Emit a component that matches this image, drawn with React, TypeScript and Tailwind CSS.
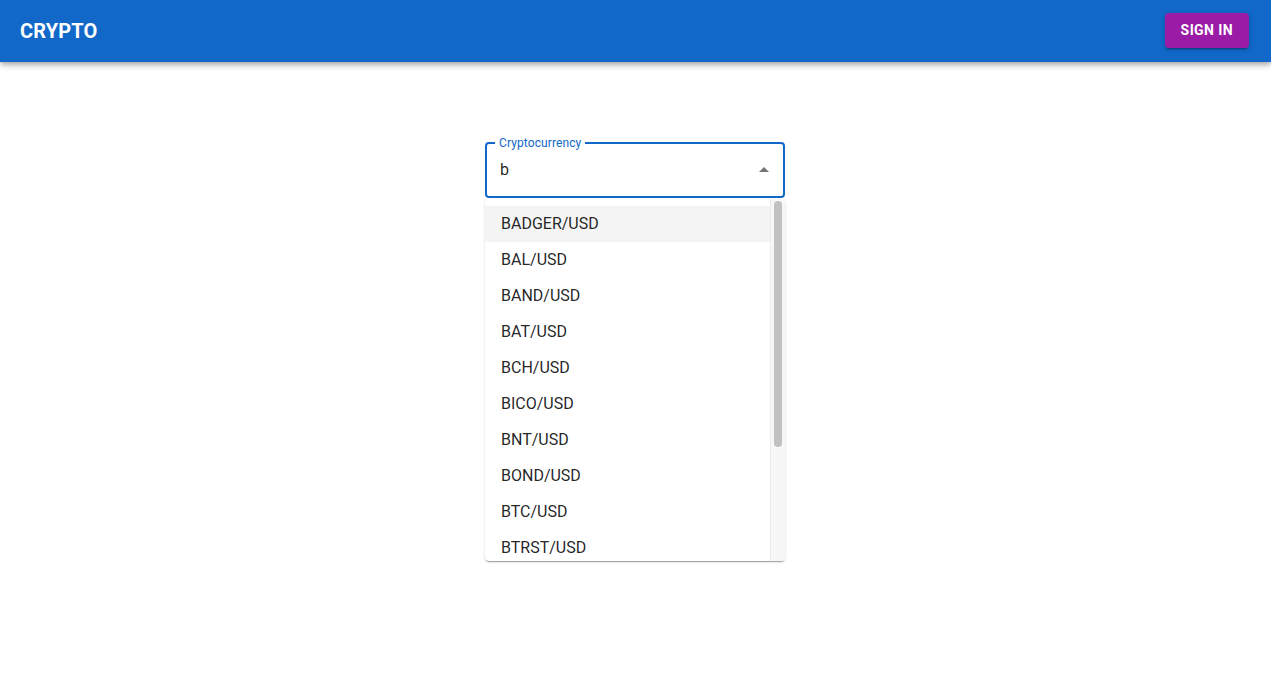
import React from "react";

const options = [
  "BADGER/USD",
  "BAL/USD",
  "BAND/USD",
  "BAT/USD",
  "BCH/USD",
  "BICO/USD",
  "BNT/USD",
  "BOND/USD",
  "BTC/USD",
  "BTRST/USD",
];

export default function App() {
  return (
    <div className="min-h-[683px] bg-white" style={{ fontFamily: "Roboto, 'Liberation Sans', sans-serif" }}>
      <header className="h-[62px] bg-[#1168c8] flex items-center justify-between pl-5 pr-[22px] shadow-[0_2px_4px_-1px_rgba(0,0,0,0.2),0_4px_5px_0_rgba(0,0,0,0.14),0_1px_10px_0_rgba(0,0,0,0.12)] relative z-10">
        <div className="text-white text-[20px] font-bold tracking-[0.15px] -mt-[1px]">CRYPTO</div>
        <button className="h-[35px] -mt-[2px] px-4 rounded-[4px] bg-[#9a1ba6] text-white text-[14px] font-bold tracking-[0.4px] uppercase shadow-[0_3px_1px_-2px_rgba(0,0,0,0.2),0_2px_2px_0_rgba(0,0,0,0.14),0_1px_5px_0_rgba(0,0,0,0.12)]">
          Sign in
        </button>
      </header>

      <div className="flex justify-center pt-[80px]">
        <div className="w-[300px] mr-[1px] flex flex-col">
          <div className="h-[56px] border-2 border-[#1168c8] rounded-[4px] pl-[13px] pr-[7px] flex items-center relative">
            <span className="absolute left-[8px] -top-[8px] bg-white px-[4px] text-[12px] leading-[14px] text-[#1168c8] tracking-[0.1px]">
              Cryptocurrency
            </span>
            <span className="flex-1 text-[16px] text-[rgba(0,0,0,0.87)]">b</span>
            <svg width="24" height="24" viewBox="0 0 24 24">
              <path d="M7 14l5-5 5 5z" fill="rgba(0,0,0,0.54)" />
            </svg>
          </div>

          <div className="mt-[1px] h-[362px] rounded-[4px] bg-white flex overflow-hidden shadow-[0_2px_1px_-1px_rgba(0,0,0,0.2),0_1px_1px_0_rgba(0,0,0,0.14),0_1px_3px_0_rgba(0,0,0,0.12)]">
            <ul className="flex-1 pt-[7px] overflow-hidden">
              {options.map((o, i) => (
                <li
                  key={o}
                  className={`h-[36px] flex items-center px-4 text-[16px] text-[rgba(0,0,0,0.87)] ${i === 0 ? "bg-[#f4f4f4]" : ""}`}
                >
                  {o}
                </li>
              ))}
            </ul>
            <div className="w-[15px] bg-[#f7f7f7] border-l border-[#ececec] flex justify-center pt-[2px]">
              <div className="w-[8px] h-[246px] rounded-full bg-[#c1c1c1]" />
            </div>
          </div>
        </div>
      </div>
    </div>
  );
}
